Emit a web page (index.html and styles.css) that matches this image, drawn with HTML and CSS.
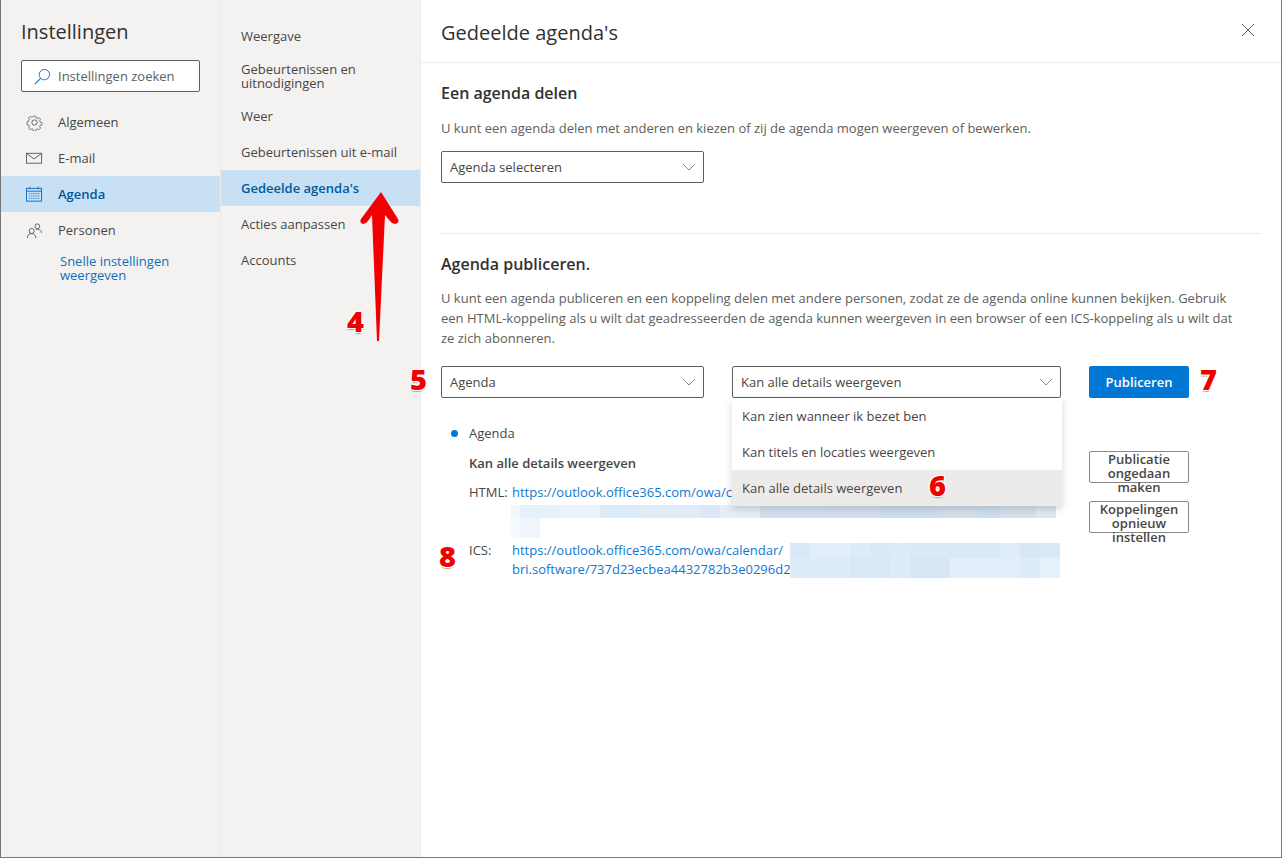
FILE: index.html
```html
<!DOCTYPE html>
<html lang="nl">
<head>
<meta charset="utf-8">
<title>Instellingen</title>
<link rel="stylesheet" href="styles.css">
</head>
<body>
<div class="dialog">
  <aside class="nav">
    <h1 class="nav-title">Instellingen</h1>
    <div class="search">
      <svg class="search-icon" viewBox="0 0 18 18" width="18" height="18"><circle cx="11" cy="7" r="5.5" fill="none" stroke="#0078d4" stroke-width="1"/><path d="M7 11 L1 17" stroke="#0078d4" stroke-width="1.2" fill="none"/></svg>
      <span>Instellingen zoeken</span>
    </div>
    <ul class="nav-list">
      <li class="nav-item">
        <svg class="nav-icon" viewBox="0 0 18 18" width="18" height="18"><g fill="none" stroke="#605e5c" stroke-width="1"><circle cx="9" cy="9" r="2.8"/><path d="M7.6 1.2h2.8l.5 2.2 1.5.7 2-1.1 1.9 2-1.1 1.9.6 1.5 2.2.6v2.8l-2.2.6-.6 1.5 1.1 1.9-1.9 2-2-1.1-1.500.6-.5 2.200H7.600l-.5-2.200-1.500-.6-2 1.100-1.900-2 1.100-1.900-.6-1.500-2.200-.6V7.500l2.200-.6.6-1.500-1.100-1.900 1.900-2 2 1.100 1.500-.7z" transform="translate(1.200 1.200) scale(.87)"/></g></svg>
        <span>Algemeen</span>
      </li>
      <li class="nav-item">
        <svg class="nav-icon" viewBox="0 0 18 18" width="18" height="18"><g fill="none" stroke="#605e5c" stroke-width="1"><rect x=".5" y="3.500" width="16" height="10.500"/><path d="M.8 3.800 8.500 9.500l7.700-5.700"/></g></svg>
        <span>E-mail</span>
      </li>
      <li class="nav-item is-active">
        <svg class="nav-icon" viewBox="0 0 18 18" width="18" height="18"><g fill="none" stroke="#0f6cbd" stroke-width="1"><rect x=".5" y="2.500" width="16" height="13.500"/><path d="M.5 5.500h16M4 .8v2.500M13 .8v2.500"/><path d="M3 8h11M3 10.500h11M3 13h11" stroke-dasharray="1 1"/></g></svg>
        <span>Agenda</span>
      </li>
      <li class="nav-item">
        <svg class="nav-icon" viewBox="0 0 18 18" width="18" height="18"><g fill="none" stroke="#605e5c" stroke-width="1"><circle cx="6" cy="9.500" r="2.700"/><circle cx="12" cy="4.500" r="2.500"/><path d="M1.500 17c0-3 1.500-4.700 4.500-4.700S10 14 10.500 17"/><path d="M10.500 8c3-1 5.500.5 6 3.500"/></g></svg>
        <span>Personen</span>
      </li>
    </ul>
    <a class="quick-link">Snelle instellingen<br>weergeven</a>
  </aside>

  <nav class="subnav">
    <a class="sub-item">Weergave</a>
    <a class="sub-item sub-item-double">Gebeurtenissen en<br>uitnodigingen</a>
    <a class="sub-item">Weer</a>
    <a class="sub-item">Gebeurtenissen uit e-mail</a>
    <a class="sub-item is-active">Gedeelde agenda's</a>
    <a class="sub-item">Acties aanpassen</a>
    <a class="sub-item">Accounts</a>
  </nav>

  <main class="main">
    <header class="main-header">
      <h2 class="main-title">Gedeelde agenda's</h2>
      <svg class="close" viewBox="0 0 14 14" width="14" height="14"><path d="M1 1 13 13M13 1 1 13" stroke="#605e5c" stroke-width="1" fill="none"/></svg>
    </header>
    <div class="content">
      <section class="share">
        <h3 class="section-title">Een agenda delen</h3>
        <p class="text">U kunt een agenda delen met anderen en kiezen of zij de agenda mogen weergeven of bewerken.</p>
        <div class="select select-small"><span>Agenda selecteren</span><svg class="chev" viewBox="0 0 14 8" width="14" height="8"><path d="M1 1 7 7 13 1" fill="none" stroke="#8a8886"/></svg></div>
      </section>
      <section class="publish">
        <h3 class="section-title section-title-pub">Agenda publiceren.</h3>
        <p class="text text-long">U kunt een agenda publiceren en een koppeling delen met andere personen, zodat ze de agenda online kunnen bekijken. Gebruik<br>een HTML-koppeling als u wilt dat geadresseerden de agenda kunnen weergeven in een browser of een ICS-koppeling als u wilt dat<br>ze zich abonneren.</p>
        <div class="controls">
          <div class="select select-small"><span>Agenda</span><svg class="chev" viewBox="0 0 14 8" width="14" height="8"><path d="M1 1 7 7 13 1" fill="none" stroke="#8a8886"/></svg></div>
          <div class="select-wrap">
            <div class="select select-large"><span>Kan alle details weergeven</span><svg class="chev" viewBox="0 0 14 8" width="14" height="8"><path d="M1 1 7 7 13 1" fill="none" stroke="#8a8886"/></svg></div>
            <ul class="menu">
              <li class="menu-item">Kan zien wanneer ik bezet ben</li>
              <li class="menu-item">Kan titels en locaties weergeven</li>
              <li class="menu-item is-current">Kan alle details weergeven</li>
            </ul>
          </div>
          <button class="primary">Publiceren</button>
        </div>
        <div class="entry">
          <div class="entry-body">
            <div class="entry-name"><i class="dot"></i>Agenda</div>
            <div class="entry-level">Kan alle details weergeven</div>
            <div class="link-row link-row-html"><span class="link-label">HTML:</span><a class="link">https://outlook.office365.com/owa/calendar/</a></div>
            <div class="link-row link-row-ics"><span class="link-label">ICS:</span><a class="link">https://outlook.office365.com/owa/calendar/<br>bri.software/737d23ecbea4432782b3e0296d2</a></div>
          </div>
          <div class="entry-actions">
            <button class="ghost">Publicatie ongedaan maken</button>
            <button class="ghost">Koppelingen opnieuw instellen</button>
          </div>
        </div>
      </section>
    </div>
  </main>

  <svg class="blur blur-html" width="545" height="33" viewBox="0 0 545 33" shape-rendering="crispEdges">
    <rect x="0" y="0" width="9" height="13" fill="#f2f7fc"/><rect x="9" y="0" width="20" height="13" fill="#e4f0fa"/><rect x="29" y="0" width="20" height="13" fill="#e6f1fa"/><rect x="49" y="0" width="40" height="13" fill="#ebf3fb"/><rect x="89" y="0" width="40" height="13" fill="#dcebf8"/><rect x="129" y="0" width="60" height="13" fill="#e0edf9"/><rect x="189" y="0" width="20" height="13" fill="#dbe9f6"/><rect x="209" y="0" width="40" height="13" fill="#e4eef8"/><rect x="249" y="0" width="60" height="13" fill="#d4e2f0"/><rect x="309" y="0" width="60" height="13" fill="#d3e1ee"/><rect x="369" y="0" width="60" height="13" fill="#cfdeec"/><rect x="429" y="0" width="40" height="13" fill="#d2e0ec"/><rect x="469" y="0" width="20" height="13" fill="#cddfee"/><rect x="489" y="0" width="36" height="13" fill="#d5e1ec"/><rect x="525" y="0" width="20" height="13" fill="#dfe8f0"/>
    <rect x="0" y="13" width="9" height="20" fill="#f7fafd"/><rect x="9" y="13" width="20" height="20" fill="#f1f6fc"/>
  </svg>
  <svg class="blur blur-ics" width="270" height="35" viewBox="0 0 270 35" shape-rendering="crispEdges">
    <rect width="270" height="15" fill="#d9e9f7"/><rect x="20" width="40" height="15" fill="#e2eef9"/><rect x="60" width="20" height="15" fill="#deecf8"/><rect x="100" width="20" height="15" fill="#dcebf8"/><rect x="210" width="20" height="15" fill="#e0edf9"/><rect x="230" width="20" height="15" fill="#d6e7f6"/>
    <rect y="15" width="270" height="20" fill="#deebf8"/><rect x="60" y="15" width="40" height="20" fill="#d9e8f6"/><rect x="120" y="15" width="40" height="20" fill="#d6e6f5"/><rect x="160" y="15" width="70" height="20" fill="#e2eefa"/><rect x="250" y="15" width="20" height="20" fill="#e4f0fa"/>
  </svg>

  <svg class="arrow" width="44" height="150" viewBox="0 0 44 150"><path d="M22 1 39 28 Q41 32 36 33 Q33 33 31 30 L26 24 L20 150 L18 150 L13 24 L9 30 Q7 33 4 33 Q0 32 2 28 Z" fill="#f00000"/></svg>
  <span class="mark mark-4">4</span>
  <span class="mark mark-5">5</span>
  <span class="mark mark-6">6</span>
  <span class="mark mark-7">7</span>
  <span class="mark mark-8">8</span>
</div>
</body>
</html>
```
FILE: styles.css
```css
* { box-sizing: border-box; }
html, body { margin: 0; padding: 0; }
body { width: 1282px; height: 858px; overflow: hidden; background: #fff; font-family: "Open Sans", "Noto Sans", sans-serif; font-size: 13px; color: #484644; }
h1, h2, h3, p, ul { margin: 0; padding: 0; }
ul { list-style: none; }
.dialog { position: relative; display: flex; width: 1282px; height: 858px; border-left: 1px solid #777; border-right: 1px solid #777; border-bottom: 1px solid #777; background: #fff; }
.nav { width: 220px; flex: none; background: #f3f2f1; border-right: 1px solid #edebe9; padding-top: 17px; }
.nav-title { font-size: 20px; font-weight: 400; line-height: 30px; color: #323130; margin-left: 20px; }
.search { display: flex; align-items: center; width: 179px; height: 32px; margin: 13px 0 12px 20px; padding-left: 12px; background: #fff; border: 1px solid #605e5c; border-radius: 2px; color: #605e5c; }
.search-icon { margin-right: 7px; flex: none; width: 17px; height: 17px; }
.nav-item { display: flex; align-items: center; height: 36px; padding-left: 25px; }
.nav-icon { margin-right: 15px; flex: none; width: 17px; height: 17px; }
.nav-item.is-active { background: #c7e0f4; color: #005a9e; font-weight: 600; border-radius: 0 2px 2px 0; }
.quick-link { display: block; margin: 6px 0 0 59px; line-height: 14px; color: #106ebe; }
.subnav { width: 200px; flex: none; background: #f3f2f1; border-right: 1px solid #edebe9; padding-top: 18px; }
.sub-item { display: flex; align-items: center; height: 36px; padding-left: 20px; }
.sub-item-double { height: 44px; line-height: 14px; }
.sub-item.is-active { background: #c7e0f4; color: #005a9e; font-weight: 600; }
.main { flex: 1; min-width: 0; background: #fff; }
.main-header { display: flex; align-items: center; justify-content: space-between; height: 63px; padding: 0 26px 0 20px; border-bottom: 1px solid #edebe9; }
.main-title { font-size: 20px; font-weight: 400; color: #323130; line-height: 30px; margin-top: 3px; }
.close { flex: none; margin-top: -2px; }
.content { padding: 0 19px 0 20px; }
.share { height: 171px; border-bottom: 1px solid #edebe9; padding-top: 19px; }
.section-title { font-size: 16px; font-weight: 600; line-height: 22px; color: #323130; }
.text { margin-top: 14px; line-height: 20px; color: #605e5c; }
.share .select { margin-top: 13px; }
.publish { padding-top: 19px; }
.text-long { margin-top: 13px; white-space: nowrap; }
.select { display: flex; align-items: center; justify-content: space-between; height: 32px; padding: 0 7px 0 8px; background: #fff; border: 1px solid #605e5c; border-radius: 2px; color: #484644; }
.select-small { width: 263px; }
.select-large { width: 329px; }
.controls { display: flex; gap: 28px; margin-top: 18px; }
.select-wrap { position: relative; }
.menu { position: absolute; top: 32px; left: 0; width: 330px; z-index: 2; background: #fff; box-shadow: 0 3px 8px rgba(0,0,0,.16); }
.menu-item { display: flex; align-items: center; height: 36px; padding-left: 10px; }
.menu-item.is-current { background: #edebe9; }
button { font-family: inherit; font-size: 13px; }
.primary { width: 100px; height: 32px; padding: 0; border: 0; border-radius: 2px; background: #0078d4; color: #fff; font-weight: 600; }
.entry { display: flex; margin-top: 25px; }
.entry-body { width: 648px; padding-left: 28px; position: relative; }
.entry-name { line-height: 20px; position: relative; }
.dot { position: absolute; left: -18px; top: 7px; width: 7px; height: 7px; border-radius: 50%; background: #0078d4; }
.entry-level { font-weight: 600; line-height: 20px; margin-top: 10px; }
.link-row { display: flex; }
.link-row-html { margin-top: 9px; line-height: 20px; }
.link-row-ics { margin-top: 39px; line-height: 19px; }
.link-label { width: 43px; flex: none; }
.link { color: #0f78d2; white-space: nowrap; }
.entry-actions { display: flex; flex-direction: column; gap: 18px; padding-top: 28px; }
.ghost { display: block; width: 100px; height: 32px; padding: 0; background: transparent; border: 1px solid #8a8886; border-radius: 2px; color: #484644; font-weight: 600; line-height: 14px; }
.blur { position: absolute; z-index: 1; display: block; }
.blur-html { left: 510px; top: 505px; }
.blur-ics { left: 789px; top: 543px; }
.arrow { position: absolute; left: 358px; top: 191px; z-index: 3; }
.mark { position: absolute; z-index: 3; font-family: "Open Sans", sans-serif; font-weight: 800; font-size: 29px; line-height: 30px; color: #f00000; text-shadow: 1px 1px 0 #fff, -1px 1px 0 #fff, 1px -1px 0 #fff, -1px -1px 0 #fff, 0 2px 1px #aaa; }
.mark-4 { left: 346px; top: 306px; }
.mark-5 { left: 409px; top: 364px; }
.mark-6 { left: 928px; top: 470px; }
.mark-7 { left: 1199px; top: 364px; }
.mark-8 { left: 438px; top: 541px; }
```
